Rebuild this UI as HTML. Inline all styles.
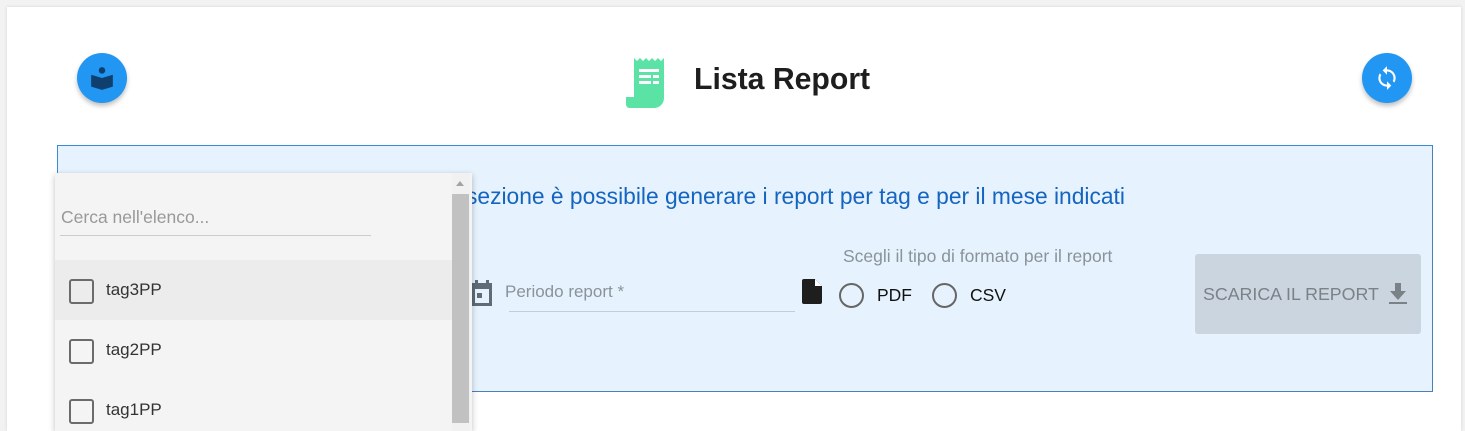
<!DOCTYPE html>
<html><head><meta charset="utf-8"><style>
*{box-sizing:border-box;margin:0;padding:0}
html,body{width:1465px;height:431px;overflow:hidden}
body{background:#f2f2f2;font-family:"Liberation Sans",Arial,sans-serif;position:relative}
.card{position:absolute;left:7px;top:7px;width:1454px;height:424px;background:#fff;box-shadow:0 0 3px rgba(0,0,0,.12)}
.fab{position:absolute;width:50px;height:50px;border-radius:50%;background:#2196f3;box-shadow:0 3px 5px rgba(0,0,0,.25);display:flex;align-items:center;justify-content:center}
.title{position:absolute;left:694px;top:63px;font-size:30.2px;font-weight:bold;color:#1e1e1e}
.panel{position:absolute;left:57px;top:145px;width:1376px;height:247px;background:#e6f2fd;border:1px solid #3a8ad8;border-right-color:#4a7fb8;border-bottom-color:#4a7fb8}
.abs{position:absolute;white-space:nowrap}
.dd{position:absolute;left:55px;top:173px;width:417px;height:258px;background:#f4f4f4;box-shadow:0 2px 6px rgba(0,0,0,.25);overflow:hidden}
.row{position:absolute;left:0;width:397px;height:60px;font-size:17px;color:#333}
.row .cb{position:absolute;left:14px;top:19px;width:25px;height:25px;border:2px solid #6b6b6b;border-radius:3px}
.row span{position:absolute;left:51px;top:20px}
.radio{position:absolute;width:25px;height:25px;border:2px solid #666;border-radius:50%}
</style></head><body>
<div class="card"></div>
<div class="fab" style="left:77px;top:53px">
<svg width="26" height="26" viewBox="0 0 24 24"><circle cx="12" cy="5" r="3" fill="#0f3f6e"/><path d="M2 9 L12 12 L22 9 V20 L12 23 L2 20Z" fill="#0f3f6e"/></svg></div>
<div class="fab" style="left:1362px;top:53px">
<svg width="26" height="26" viewBox="0 0 24 24"><path fill="#fff" d="M12 4V1L8 5l4 4V6c3.31 0 6 2.69 6 6 0 1.01-.25 1.97-.7 2.8l1.46 1.46A7.93 7.93 0 0 0 20 12c0-4.42-3.58-8-8-8zm0 14c-3.31 0-6-2.69-6-6 0-1.01.25-1.97.7-2.8L5.24 7.74A7.93 7.93 0 0 0 4 12c0 4.42 3.58 8 8 8v3l4-4-4-4v3z"/></svg></div>
<svg class="abs" style="left:625px;top:56px" width="46" height="52" viewBox="0 0 46 52">
<path d="M9 2 L12 5 L15 2 L18 5 L21 2 L24 5 L27 2 L30 5 L33 2 L36 5 L39 2 V42 A10 10 0 0 1 29 52 H4 A4 4 0 0 1 1 48 V41 H9Z" fill="#5be3a6"/>
<rect x="14" y="13" width="20" height="3" fill="#fff"/><rect x="14" y="19" width="12" height="3" fill="#fff"/><rect x="28" y="19" width="6" height="3" fill="#fff"/><rect x="14" y="25" width="12" height="3" fill="#fff"/><rect x="28" y="25" width="6" height="3" fill="#fff"/>
</svg>
<div class="title">Lista Report</div>
<div class="panel"></div>
<div class="abs" style="left:466px;top:183px;font-size:22.8px;color:#1565c0">sezione è possibile generare i report per tag e per il mese indicati</div>
<div class="abs" style="left:843px;top:246px;font-size:17.5px;color:#8a939b">Scegli il tipo di formato per il report</div>
<svg class="abs" style="left:470px;top:280px" width="24" height="26" viewBox="0 0 24 26"><path fill="#5f6b77" d="M5 0h3v3h8V0h3v3h3v23H2V3h3zM5 9v14h14V9z"/><rect x="7" y="13" width="5" height="5" fill="#5f6b77"/></svg>
<div class="abs" style="left:505px;top:282px;font-size:17px;color:#8a939b">Periodo report *</div>
<div class="abs" style="left:509px;top:311px;width:286px;height:1px;background:#c5ccd3"></div>
<svg class="abs" style="left:802px;top:279px" width="20" height="25" viewBox="0 0 20 25"><path fill="#1e1e1e" d="M2 0h11l7 7v16a2 2 0 0 1-2 2H2a2 2 0 0 1-2-2V2a2 2 0 0 1 2-2z"/><path fill="#fff" d="M13 0v7h7z"/></svg>
<div class="radio" style="left:839px;top:283px"></div>
<div class="abs" style="left:877px;top:285px;font-size:17.5px;color:#111">PDF</div>
<div class="radio" style="left:932px;top:283px"></div>
<div class="abs" style="left:970px;top:285px;font-size:17.5px;color:#111">CSV</div>
<div class="abs" style="left:1195px;top:254px;width:226px;height:80px;background:#cbd5df;border-radius:3px"></div>
<div class="abs" style="left:1203px;top:284px;font-size:17.8px;color:#7a8187">SCARICA IL REPORT</div>
<svg class="abs" style="left:1388px;top:283px" width="20" height="22" viewBox="0 0 20 22"><path fill="#7a8187" d="M7 0h6v8h5l-8 9-8-9h5z"/><rect x="1" y="19" width="18" height="2" fill="#7a8187"/></svg>
<div class="dd">
<div class="abs" style="left:6px;top:34px;font-size:17.5px;color:#999">Cerca nell'elenco...</div>
<div class="abs" style="left:5px;top:62px;width:311px;height:1px;background:#ccc"></div>
<div class="row" style="top:87px;background:#ececec"><div class="cb"></div><span>tag3PP</span></div>
<div class="row" style="top:147px"><div class="cb"></div><span>tag2PP</span></div>
<div class="row" style="top:207px;height:51px"><div class="cb"></div><span>tag1PP</span></div>
<div class="abs" style="left:397px;top:0;width:18px;height:258px;background:#f1f1f1"></div>
<div class="abs" style="left:397px;top:21px;width:17px;height:229px;background:#c1c1c1"></div>
<div class="abs" style="left:401px;top:8px;width:0;height:0;border-left:4px solid transparent;border-right:4px solid transparent;border-bottom:5px solid #a3a3a3"></div>
</div>
</body></html>
